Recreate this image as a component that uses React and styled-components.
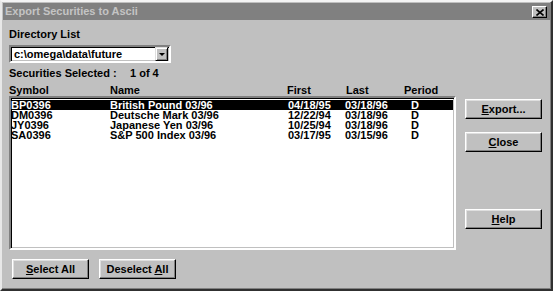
import React from 'react';
import styled, { createGlobalStyle } from 'styled-components';

const GlobalStyle = createGlobalStyle`
  html, body {
    margin: 0;
    padding: 0;
    background: #c0c0c0;
  }
  * {
    box-sizing: border-box;
  }
`;

const Window = styled.div`
  width: 553px;
  height: 291px;
  display: flex;
  flex-direction: column;
  background: #c0c0c0;
  border-style: solid;
  border-width: 2px;
  border-color: #f4f4f4 #303030 #303030 #e8e8e8;
  box-shadow: inset -1px -1px 0 #808080;
  padding: 1px;
  font-family: "Liberation Sans", Arial, sans-serif;
  font-weight: bold;
  font-size: 11px;
  color: #000;
`;

const TitleBar = styled.div`
  height: 17px;
  display: flex;
  align-items: center;
  justify-content: space-between;
  background: #808080;
  color: #c4c4c4;
  padding: 0 2px 0 2px;
  line-height: 13px;
`;

const CloseBox = styled.div`
  width: 15px;
  height: 12px;
  margin-top: 1px;
  margin-right: 1px;
  display: flex;
  align-items: center;
  justify-content: center;
  background: #c0c0c0;
  border-style: solid;
  border-width: 1px;
  border-color: #fff #000 #000 #fff;
  box-shadow: inset -1px -1px 0 #808080;
`;

const Body = styled.div`
  flex: 1;
  display: flex;
  gap: 9px;
  padding: 0 0 0 6px;
`;

const LeftPane = styled.div`
  width: 447px;
  display: flex;
  flex-direction: column;
`;

const Label = styled.div`
  line-height: 13px;
  margin-top: ${p => p.top || 0}px;
  white-space: nowrap;
`;

const Counter = styled.span`
  display: inline-block;
  width: 121px;
`;

const Combo = styled.div`
  margin-top: 4px;
  width: 162px;
  height: 18px;
  display: flex;
  align-items: center;
  background: #fff;
  border-style: solid;
  border-width: 2px;
  border-color: #808080 #fff #fff #808080;
  box-shadow: inset 1px 1px 0 #000, inset -1px -1px 0 #c0c0c0;
  padding: 0 1px 0 3px;
`;

const ComboText = styled.span`
  flex: 1;
  font-size: 11px;
  line-height: 12px;
`;

const ArrowButton = styled.div`
  width: 13px;
  height: 14px;
  display: flex;
  align-items: center;
  justify-content: center;
  background: #c0c0c0;
  border-style: solid;
  border-width: 1px;
  border-color: #dfdfdf #000 #000 #dfdfdf;
  box-shadow: inset 1px 1px 0 #fff, inset -1px -1px 0 #808080;
`;

const Triangle = styled.div`
  width: 0;
  height: 0;
  border-left: 3px solid transparent;
  border-right: 3px solid transparent;
  border-top: 3px solid #000;
`;

const HeaderRow = styled.div`
  margin-top: 4px;
  display: grid;
  grid-template-columns: 101px 177px 59px 58px 1fr;
  line-height: 12px;
  height: 12px;
  white-space: nowrap;
`;

const ListBox = styled.div`
  height: 154px;
  background: #fff;
  border-style: solid;
  border-width: 2px;
  border-color: #808080 #fff #fff #808080;
  box-shadow: inset 1px 1px 0 #000, inset -1px -1px 0 #c0c0c0;
  padding: 2px 1px 0 0;
`;

const Row = styled.div`
  display: grid;
  grid-template-columns: 99px 178px 57px 66px 1fr;
  height: 10px;
  line-height: 10px;
  white-space: nowrap;
  background: ${p => (p.selected ? '#000' : 'transparent')};
  color: ${p => (p.selected ? '#fff' : '#000')};
`;

const BottomBar = styled.div`
  margin-top: 9px;
  display: flex;
  gap: 10px;
  padding-left: 3px;
`;

const RightPane = styled.div`
  display: flex;
  flex-direction: column;
  padding-top: 79px;
`;

const Button = styled.div`
  width: 77px;
  height: 20px;
  margin-top: ${p => p.top || 0}px;
  display: flex;
  align-items: center;
  justify-content: center;
  background: #c0c0c0;
  border-style: solid;
  border-width: 1px;
  border-color: #fff #000 #000 #fff;
  box-shadow: inset -1px -1px 0 #808080, inset 1px 1px 0 #dfdfdf;
  line-height: 13px;
  white-space: nowrap;

  u {
    text-decoration: underline;
    text-underline-offset: 1px;
  }
`;

const securities = [
  { symbol: 'BP0396', name: 'British Pound 03/96', first: '04/18/95', last: '03/18/96', period: 'D' },
  { symbol: 'DM0396', name: 'Deutsche Mark 03/96', first: '12/22/94', last: '03/18/96', period: 'D' },
  { symbol: 'JY0396', name: 'Japanese Yen 03/96', first: '10/25/94', last: '03/18/96', period: 'D' },
  { symbol: 'SA0396', name: 'S&P 500 Index 03/96', first: '03/17/95', last: '03/15/96', period: 'D' },
];

export default function App() {
  return (
    <>
      <GlobalStyle />
      <Window>
        <TitleBar>
          <span>Export Securities to Ascii</span>
          <CloseBox>
            <svg width="8" height="7" viewBox="0 0 8 7">
              <path d="M0.5 0.5 L7.5 6.5 M7.5 0.5 L0.5 6.5" stroke="#000" strokeWidth="1.6" />
            </svg>
          </CloseBox>
        </TitleBar>
        <Body>
          <LeftPane>
            <Label top={8}>Directory List</Label>
            <Combo>
              <ComboText>c:\omega\data\future</ComboText>
              <ArrowButton>
                <Triangle />
              </ArrowButton>
            </Combo>
            <Label top={4}>
              <Counter>Securities Selected :</Counter>1 of 4
            </Label>
            <HeaderRow>
              <span>Symbol</span>
              <span>Name</span>
              <span>First</span>
              <span>Last</span>
              <span>Period</span>
            </HeaderRow>
            <ListBox>
              {securities.map((s, i) => (
                <Row key={s.symbol} selected={i === 0}>
                  <span>{s.symbol}</span>
                  <span>{s.name}</span>
                  <span>{s.first}</span>
                  <span>{s.last}</span>
                  <span>{s.period}</span>
                </Row>
              ))}
            </ListBox>
            <BottomBar>
              <Button><span><u>S</u>elect All</span></Button>
              <Button><span>Deselect <u>A</u>ll</span></Button>
            </BottomBar>
          </LeftPane>
          <RightPane>
            <Button><span><u>E</u>xport...</span></Button>
            <Button top={13}><span><u>C</u>lose</span></Button>
            <Button top={57}><span><u>H</u>elp</span></Button>
          </RightPane>
        </Body>
      </Window>
    </>
  );
}
